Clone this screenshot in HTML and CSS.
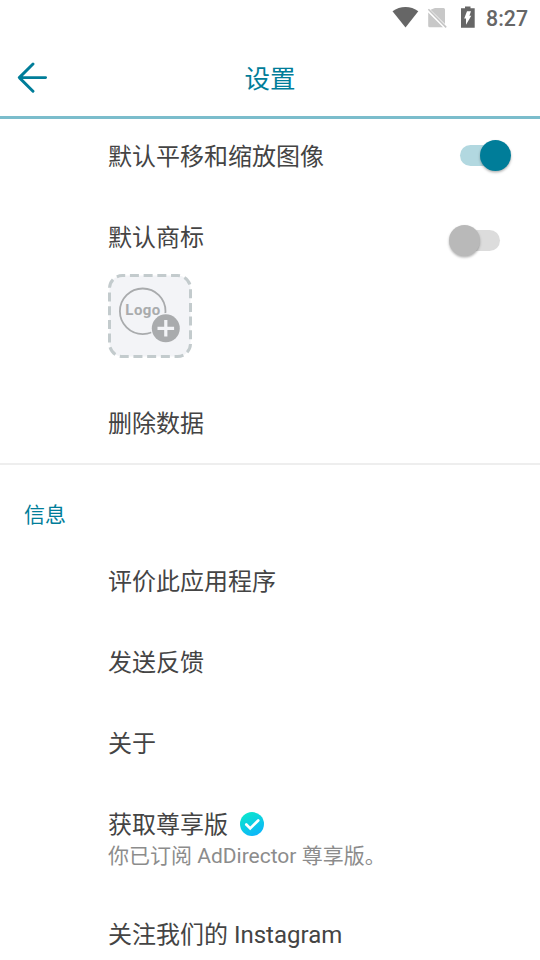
FILE: index.html
```html
<!DOCTYPE html>
<html lang="zh-CN">
<head>
<meta charset="utf-8">
<title>设置</title>
<link rel="stylesheet" href="styles.css">
</head>
<body>
<div class="screen">
  <div class="status">
    <svg class="status-icons" width="90" height="36" viewBox="0 0 90 36">
      <path d="M2.5 11.3C10 5.4 21 5.4 28.3 11.3L15.5 27.5Z" fill="#666"/>
      <path d="M45 8H53.5Q55 8 55 9.5V24L40.5 9.7ZM38.2 12.5L53 27.3H39.7Q38.2 27.3 38.2 25.8Z" fill="#c8c8c8"/>
      <path d="M38.4 9.2L56.2 27.4" stroke="#c4c4c4" stroke-width="1.6"/>
      <path d="M75 6.5H80.5V8.3H84.7V27.8H71V8.3H75Z" fill="#666"/>
      <path d="M77 11.3H81L79.4 15.7H81.3L76 24.8V18.6H74.2Z" fill="#fff"/>
    </svg>
    <span class="clock">8:27</span>
  </div>
  <header class="header">
    <svg class="back" width="32" height="32" viewBox="0 0 32 32" fill="none" stroke="#007d99" stroke-width="2.9" stroke-linecap="round" stroke-linejoin="round">
      <path d="M16 2L2.3 15.6L16 29.3M2.3 15.6H28.6"/>
    </svg>
    <h1 class="title">设置</h1>
  </header>
  <main>
    <div class="row row-first"><span>默认平移和缩放图像</span><span class="toggle on"></span></div>
    <div class="brand">
      <div class="brand-head"><span>默认商标</span><span class="toggle off"></span></div>
      <svg class="logo" width="84" height="84" viewBox="0 0 84 84">
        <rect x="1.5" y="1.5" width="81" height="81" rx="13" fill="#f3f4f7" stroke="#c3cbcd" stroke-width="3" stroke-dasharray="9 4.71" stroke-dashoffset="6.3"/>
        <circle cx="34.7" cy="37.3" r="22.8" fill="none" stroke="#a9abad" stroke-width="1.8"/>
        <text class="logo-text" x="17.3" y="41.3" textLength="35">Logo</text>
        <circle cx="57.8" cy="54.3" r="15.2" fill="#f3f4f7"/>
        <circle cx="57.8" cy="54.3" r="14" fill="#a9abad"/>
        <path d="M57.8 46V62.6M49.5 54.3H66.1" stroke="#f3f4f7" stroke-width="3.2"/>
      </svg>
    </div>
    <div class="row row-delete">删除数据</div>
    <section class="info">
      <h2 class="section-title">信息</h2>
      <div class="row">评价此应用程序</div>
      <div class="row">发送反馈</div>
      <div class="row">关于</div>
      <div class="premium">
        <div class="premium-name"><span>获取尊享版</span>
          <svg class="verified" width="24" height="24" viewBox="0 0 24 24">
            <defs><linearGradient id="badge" x1="0.2" y1="0" x2="0.7" y2="1"><stop offset="0" stop-color="#0be8cb"/><stop offset="1" stop-color="#0cb4fb"/></linearGradient></defs>
            <circle cx="12" cy="12" r="12" fill="url(#badge)"/>
            <path d="M6.3 12.5L10.2 16.4L18.2 8.5" fill="none" stroke="#fff" stroke-width="2.7" stroke-linecap="round"/>
          </svg>
        </div>
        <div class="premium-note">你已订阅 AdDirector 尊享版。</div>
      </div>
      <div class="row">关注我们的 Instagram</div>
    </section>
  </main>
</div>
</body>
</html>
```

FILE: styles.css
```css
* { box-sizing: border-box; }
body { margin: 0; background: #fff; }
.screen {
  width: 540px;
  height: 960px;
  overflow: hidden;
  background: #fff;
  color: #444;
  font-family: Roboto, "Noto Sans CJK SC", sans-serif;
  font-size: 24px;
  line-height: 32px;
}
.status {
  display: flex;
  justify-content: flex-end;
  align-items: center;
  height: 36px;
  padding-right: 12px;
}
.status-icons { margin-right: 6px; }
.clock { margin-top: 2px; font-size: 21.3px; font-weight: 500; color: #666; }
.header {
  display: grid;
  grid-template-columns: 64px 1fr 64px;
  align-items: center;
  height: 83px;
  border-bottom: 3px solid #7bbdcc;
}
.back { margin: 3px 0 0 17px; }
.title {
  margin: 5px 0 0;
  text-align: center;
  font-size: 25.5px;
  font-weight: 400;
  color: #007d99;
}
.row {
  display: flex;
  align-items: center;
  height: 81px;
  padding-left: 108px;
}
.row-first { height: 76px; justify-content: space-between; padding-right: 29px; }
.brand { padding: 27px 40px 0 108px; }
.brand-head { display: flex; justify-content: space-between; height: 32px; margin-bottom: 20px; }
.logo { display: block; }
.logo-text { font-size: 15px; font-weight: 700; fill: #a9abad; }
.row-delete { height: 107px; padding-top: 27px; border-bottom: 2px solid #eee; }
.toggle {
  display: flex;
  align-items: center;
  width: 51px;
  height: 31px;
}
.row-first .toggle { margin-top: -3px; }
.brand-head .toggle { margin-top: 3px; }
.toggle::before { content: ""; width: 41px; height: 21px; border-radius: 11px; flex: none; }
.toggle::after {
  content: "";
  width: 31px;
  height: 31px;
  border-radius: 50%;
  flex: none;
  box-shadow: 0 1.5px 2.5px rgba(0, 0, 0, .3);
}
.on::before { background: #b2d8e0; }
.on::after { background: #007d99; margin-left: -21px; }
.off { flex-direction: row-reverse; }
.off::before { background: #dcdcdc; }
.off::after { background: #b9b9b9; margin-right: -21px; z-index: 1; }
.info { padding-top: 34px; }
.section-title {
  margin: 0 0 10px 24px;
  font-size: 21px;
  font-weight: 400;
  color: #007d99;
}
.premium { height: 110px; padding: 25px 0 0 108px; }
.premium-name { display: flex; align-items: center; gap: 12px; height: 32px; }
.verified { margin-top: -2px; }
.premium-note { font-size: 21px; line-height: 30px; color: #8c8c8c; }
```
